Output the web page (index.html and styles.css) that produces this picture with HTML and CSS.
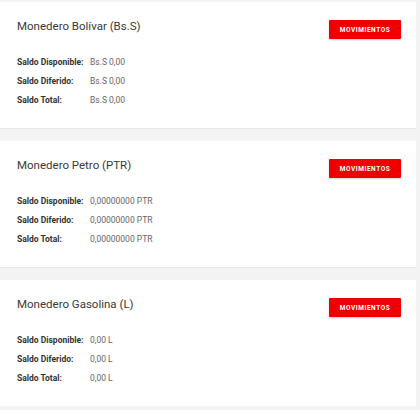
FILE: index.html
```html
<!DOCTYPE html>
<html lang="es">
<head>
<meta charset="utf-8">
<link rel="stylesheet" href="styles.css">
</head>
<body>
<div class="list">
  <section class="card">
    <div class="head">
      <h2 class="title">Monedero Bolívar (Bs.S)</h2>
      <button class="btn">MOVIMIENTOS</button>
    </div>
    <div class="rows">
      <div class="row"><span class="label">Saldo Disponible:</span><span class="value">Bs.S 0,00</span></div>
      <div class="row"><span class="label">Saldo Diferido:</span><span class="value">Bs.S 0,00</span></div>
      <div class="row"><span class="label">Saldo Total:</span><span class="value">Bs.S 0,00</span></div>
    </div>
  </section>
  <section class="card">
    <div class="head">
      <h2 class="title">Monedero Petro (PTR)</h2>
      <button class="btn">MOVIMIENTOS</button>
    </div>
    <div class="rows">
      <div class="row"><span class="label">Saldo Disponible:</span><span class="value">0,00000000 PTR</span></div>
      <div class="row"><span class="label">Saldo Diferido:</span><span class="value">0,00000000 PTR</span></div>
      <div class="row"><span class="label">Saldo Total:</span><span class="value">0,00000000 PTR</span></div>
    </div>
  </section>
  <section class="card">
    <div class="head">
      <h2 class="title">Monedero Gasolina (L)</h2>
      <button class="btn">MOVIMIENTOS</button>
    </div>
    <div class="rows">
      <div class="row"><span class="label">Saldo Disponible:</span><span class="value">0,00 L</span></div>
      <div class="row"><span class="label">Saldo Diferido:</span><span class="value">0,00 L</span></div>
      <div class="row"><span class="label">Saldo Total:</span><span class="value">0,00 L</span></div>
    </div>
  </section>
</div>
</body>
</html>
```
FILE: styles.css
```css
html, body {
  margin: 0;
  padding: 0;
  background: #f3f3f3;
  font-family: Roboto, "Liberation Sans", sans-serif;
}
.list {
  display: flex;
  flex-direction: column;
  gap: 13px;
  padding: 2px 4px 0 0;
}
.card {
  background: #ffffff;
  height: 126px;
  box-sizing: border-box;
  padding: 18px 15px 0 17px;
  box-shadow: 0 1px 1px rgba(0,0,0,0.04);
}
.head {
  display: flex;
  justify-content: space-between;
  align-items: flex-start;
}
.title {
  margin: -1px 0 0 0;
  font-size: 11.5px;
  font-weight: 400;
  color: #3a3a3a;
  line-height: 14px;
}
.btn {
  width: 72px;
  height: 19px;
  border: 0;
  border-radius: 1px;
  background: #ee0000;
  color: #fff;
  font-family: Roboto, "Liberation Sans", sans-serif;
  font-size: 6.5px;
  font-weight: 700;
  letter-spacing: 0.55px;
  padding: 0;
  box-shadow: 0 1px 2px rgba(0,0,0,0.2);
}
.rows {
  display: flex;
  flex-direction: column;
  margin-top: 13px;
}
.row {
  display: flex;
  height: 19px;
  align-items: center;
  font-size: 8.5px;
}
.label {
  width: 73px;
  font-weight: 700;
  color: #333;
}
.value {
  color: #666;
}
```
